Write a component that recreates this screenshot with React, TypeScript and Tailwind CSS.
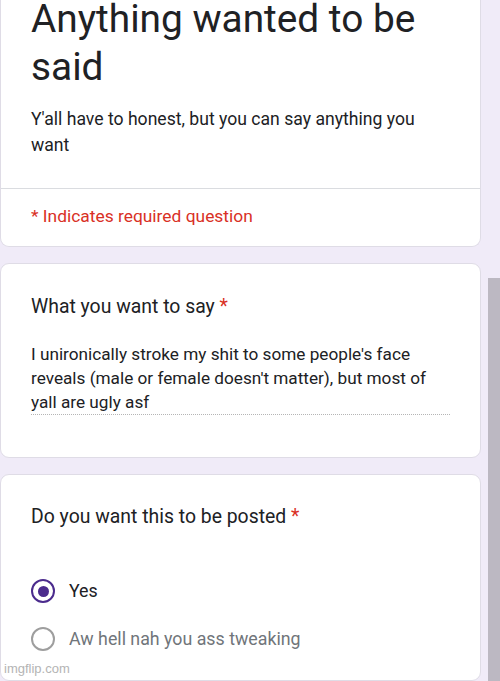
import React from "react";

function Radio({ checked }: { checked?: boolean }) {
  return (
    <span
      className={
        checked
          ? "flex h-[24px] w-[24px] shrink-0 items-center justify-center rounded-full border-[2.5px] border-[#4b2b8d]"
          : "flex h-[24px] w-[24px] shrink-0 items-center justify-center rounded-full border-[2px] border-[#9e9e9e]"
      }
    >
      {checked && <span className="h-[11px] w-[11px] rounded-full bg-[#4b2b8d]" />}
    </span>
  );
}

export default function App() {
  return (
    <div
      className="relative flex h-[681px] w-[500px] overflow-hidden bg-[#f0ebf8] text-[#202124]"
      style={{ fontFamily: "Roboto, 'Noto Sans', sans-serif" }}
    >
      <div className="flex w-[481px] shrink-0 flex-col gap-[16px]">
        {/* header card */}
        <div className="rounded-b-[9px] border border-t-0 border-[#dfdce6] bg-white">
          <div className="px-[30px] pb-[30px]">
            <h1 className="-mt-[5px] text-[38.8px] leading-[48px] font-normal">
              Anything wanted to be said
            </h1>
            <p className="mt-[15px] text-[17.6px] leading-[26px]">
              Y'all have to honest, but you can say anything you want
            </p>
          </div>
          <div className="border-t border-[#dadce0] px-[30px] pt-[15px] pb-[18px] text-[17.4px] leading-[24px] text-[#d93025]">
            * Indicates required question
          </div>
        </div>

        {/* question 1 */}
        <div className="rounded-[9px] border border-[#dfdce6] bg-white px-[30px] pt-[31px] pb-[42px]">
          <div className="text-[19.4px] leading-[24px]">
            What you want to say <span className="text-[#d93025]">*</span>
          </div>
          <div className="mt-[23px] border-b border-dotted border-[#b5b5b5] text-[17.2px] leading-[24px]">
            I unironically stroke my shit to some people's face reveals (male or female doesn't matter), but most of yall are ugly asf
          </div>
        </div>

        {/* question 2 */}
        <div className="h-[300px] rounded-[9px] border border-[#dfdce6] bg-white px-[30px] pt-[30px]">
          <div className="text-[19.4px] leading-[24px]">
            Do you want this to be posted <span className="text-[#d93025]">*</span>
          </div>
          <div className="mt-[38px] flex flex-col">
            <div className="flex h-[48px] items-center gap-[14px]">
              <Radio checked />
              <span className="text-[17.8px]">Yes</span>
            </div>
            <div className="flex h-[48px] items-center gap-[14px]">
              <Radio />
              <span className="text-[17.8px] text-[#70757a]">Aw hell nah you ass tweaking</span>
            </div>
          </div>
        </div>
      </div>

      <div className="ml-[7px] flex w-[12px] flex-col pt-[278px]">
        <div className="flex-1 bg-[#bcb8c2]" />
      </div>

      <span
        className="absolute bottom-[3px] left-[4px] text-[13px] text-[#b4b4b4]"
        style={{ fontFamily: "'Liberation Sans', Arial, sans-serif" }}
      >
        imgflip.com
      </span>
    </div>
  );
}
